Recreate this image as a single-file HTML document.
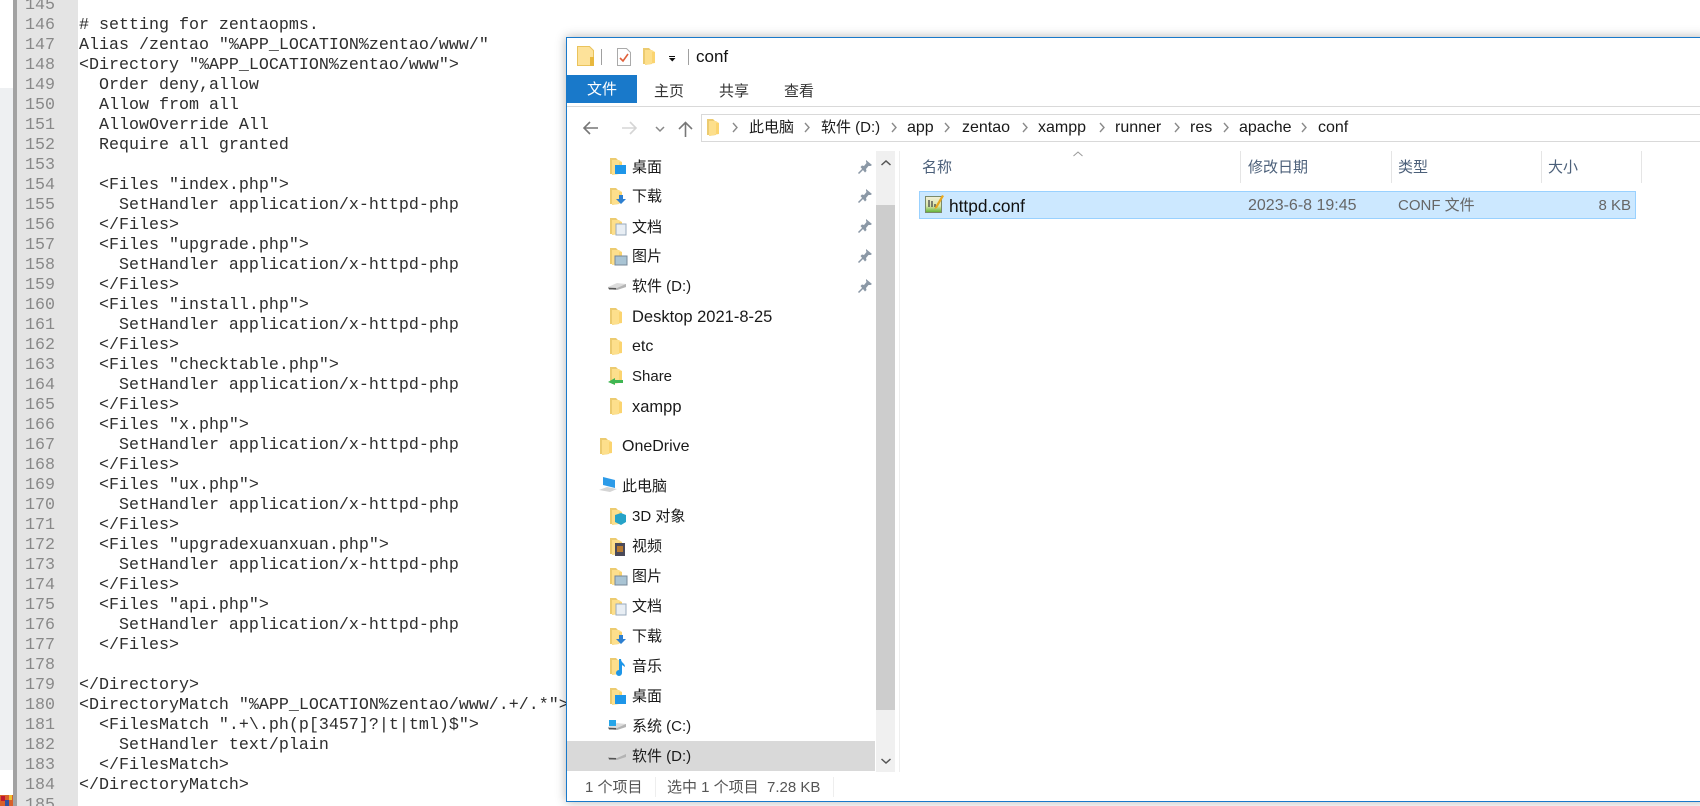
<!DOCTYPE html>
<html><head><meta charset="utf-8"><style>
html,body{margin:0;padding:0;width:1700px;height:806px;overflow:hidden;background:#fff}
#r{position:relative;width:1700px;height:806px;overflow:hidden;font-family:"Liberation Sans","Noto Sans CJK SC",sans-serif}
.a{position:absolute}
.t{position:absolute;white-space:pre;font-size:15px;line-height:20px;color:#1a1a1a}
.m{font-size:16px}
pre{position:absolute;margin:0;font:16.67px/20px "Liberation Mono",monospace}
.n{color:#555}.h{color:#4c607a}.g{color:#666}
svg{position:absolute;overflow:visible}
</style></head><body><div id="r">
<div class="a" style="left:0;top:88px;width:13px;height:682px;background:#eef0f2"></div>
<div class="a" style="left:13px;top:0;width:4px;height:806px;background:#a2a2a2"></div>
<div class="a" style="left:17px;top:0;width:61px;height:806px;background:#e4e4e4"></div>
<svg style="left:0;top:795px" width="13" height="11"><rect width="13" height="11" fill="#d8602a"/><rect x="1" y="1" width="4" height="5" fill="#c01830"/><rect x="5" y="5" width="4" height="6" fill="#3050a0"/><rect x="9" y="0" width="3" height="5" fill="#f0c030"/></svg>
<pre style="left:25px;top:-4px;color:#888">
145
146
147
148
149
150
151
152
153
154
155
156
157
158
159
160
161
162
163
164
165
166
167
168
169
170
171
172
173
174
175
176
177
178
179
180
181
182
183
184
185</pre>
<pre style="left:79px;top:-4px;color:#2e2e2e">

# setting for zentaopms.
Alias /zentao "%APP_LOCATION%zentao/www/"
&lt;Directory "%APP_LOCATION%zentao/www"&gt;
  Order deny,allow
  Allow from all
  AllowOverride All
  Require all granted

  &lt;Files "index.php"&gt;
    SetHandler application/x-httpd-php
  &lt;/Files&gt;
  &lt;Files "upgrade.php"&gt;
    SetHandler application/x-httpd-php
  &lt;/Files&gt;
  &lt;Files "install.php"&gt;
    SetHandler application/x-httpd-php
  &lt;/Files&gt;
  &lt;Files "checktable.php"&gt;
    SetHandler application/x-httpd-php
  &lt;/Files&gt;
  &lt;Files "x.php"&gt;
    SetHandler application/x-httpd-php
  &lt;/Files&gt;
  &lt;Files "ux.php"&gt;
    SetHandler application/x-httpd-php
  &lt;/Files&gt;
  &lt;Files "upgradexuanxuan.php"&gt;
    SetHandler application/x-httpd-php
  &lt;/Files&gt;
  &lt;Files "api.php"&gt;
    SetHandler application/x-httpd-php
  &lt;/Files&gt;

&lt;/Directory&gt;
&lt;DirectoryMatch "%APP_LOCATION%zentao/www/.+/.*"&gt;
  &lt;FilesMatch ".+\.ph(p[3457]?|t|tml)$"&gt;
    SetHandler text/plain
  &lt;/FilesMatch&gt;
&lt;/DirectoryMatch&gt;
</pre>

<div class="a" style="left:566px;top:37px;width:1140px;height:763px;background:#fff;border:1px solid #1979ca;border-width:1px 0 1px 1px;box-shadow:0 0 10px rgba(0,0,0,.3)"></div>

<svg width="0" height="0" style="left:0;top:0"><defs>
<g id="f"><path d="M0 0h6l3 3v13l-7 1v-1H0z" fill="#eccb70"/><path d="M2 2h7l3 2v11l-10 2z" fill="#fddf8c"/><path d="M9 4h3v11H9z" fill="#fbd470"/></g>
<g id="p"><path d="M8 0l6 5-1.500 1-2 0-2.500 3 .5 2-1.500 1.500L2.500 7 4 5.500l2 .5 2.500-3-.5-1.500z" fill="#8b98a6"/><path d="M5 9L.5 13.500" stroke="#8b98a6" stroke-width="1.500"/></g>
<path id="c" d="M0 0l4 4.500-4 4.500" fill="none" stroke="#8a8a8a" stroke-width="1.400"/>
<g id="d"><path d="M0 7l9-4 9 1v3l-9 3-9-1z" fill="#dcdcdc"/><path d="M0 7l9 1 9-4v3l-9 3-9-1z" fill="#b4b4b4"/><rect x="1" y="8" width="7" height="1.500" fill="#555"/></g>
</defs></svg>

<!-- title bar -->
<svg style="left:577px;top:46px" width="18" height="21"><path d="M.5.500h12l4 4v15H.5z" fill="#fde29a" stroke="#eac35c"/><rect x="13" y="11" width="4" height="9" fill="#e8b83e"/></svg>
<div class="a" style="left:601px;top:49px;width:1px;height:16px;background:#a0a0a0"></div>
<svg style="left:617px;top:48px" width="14" height="18"><path d="M.5.500h9l4 4v13H.5z" fill="#fff" stroke="#aaa"/><path d="M3 10l3 3 5-7" fill="none" stroke="#e0603a" stroke-width="1.600"/></svg>
<svg style="left:643px;top:48px" width="14" height="19"><use href="#f"/></svg>
<div class="a" style="left:669px;top:56px;width:6px;height:1px;background:#111"></div>
<svg style="left:669px;top:58px" width="7" height="4"><path d="M0 0h6.500l-3.200 3.500z" fill="#111"/></svg>
<div class="a" style="left:688px;top:49px;width:1px;height:16px;background:#a0a0a0"></div>
<div class="t" style="left:696px;top:46px;font-size:17px;line-height:22px;color:#111">conf</div>

<!-- tabs -->
<div class="a" style="left:567px;top:75px;width:70px;height:28px;background:#1979ca"></div>
<div class="t" style="left:587px;top:80px;color:#fff">文件</div>
<div class="t" style="left:654px;top:82px;color:#333">主页</div>
<div class="t" style="left:719px;top:82px;color:#333">共享</div>
<div class="t" style="left:784px;top:82px;color:#333">查看</div>
<div class="a" style="left:567px;top:106px;width:1133px;height:1px;background:#d9d9d9"></div>

<!-- nav buttons -->
<svg style="left:583px;top:121px" width="16" height="14"><path d="M15 7H1M7 1L1 7l6 6" fill="none" stroke="#777" stroke-width="1.600"/></svg>
<svg style="left:622px;top:121px" width="16" height="14"><path d="M0 7h14M8 1l6 6-6 6" fill="none" stroke="#d5d5d5" stroke-width="1.600"/></svg>
<svg style="left:655px;top:126px" width="10" height="6"><path d="M1 1l4 4 4-4" fill="none" stroke="#888" stroke-width="1.500"/></svg>
<svg style="left:678px;top:121px" width="15" height="16"><path d="M7.500 16V1.500M1 8l6.500-6.500L14 8" fill="none" stroke="#777" stroke-width="1.600"/></svg>

<!-- address -->
<div class="a" style="left:701px;top:114px;width:1000px;height:26px;border:1px solid #d9d9d9"></div>
<svg style="left:707px;top:119px" width="14" height="19"><use href="#f"/></svg>
<svg style="left:733px;top:123px"><use href="#c"/></svg>
<svg style="left:805px;top:123px"><use href="#c"/></svg>
<svg style="left:892px;top:123px"><use href="#c"/></svg>
<svg style="left:945px;top:123px"><use href="#c"/></svg>
<svg style="left:1023px;top:123px"><use href="#c"/></svg>
<svg style="left:1100px;top:123px"><use href="#c"/></svg>
<svg style="left:1175px;top:123px"><use href="#c"/></svg>
<svg style="left:1224px;top:123px"><use href="#c"/></svg>
<svg style="left:1302px;top:123px"><use href="#c"/></svg>
<div class="t" style="left:749px;top:118px">此电脑</div>
<div class="t" style="left:821px;top:118px">软件 (D:)</div>
<div class="t m" style="left:907px;top:118px">app</div>
<div class="t m" style="left:962px;top:118px">zentao</div>
<div class="t m" style="left:1038px;top:118px">xampp</div>
<div class="t m" style="left:1115px;top:118px">runner</div>
<div class="t m" style="left:1190px;top:118px">res</div>
<div class="t m" style="left:1239px;top:118px">apache</div>
<div class="t m" style="left:1318px;top:118px">conf</div>

<!-- nav pane selection -->
<div class="a" style="left:567px;top:741px;width:308px;height:30px;background:#d9d9d9"></div>

<!-- nav icons -->
<svg style="left:610px;top:158px" width="20" height="19"><use href="#f"/><rect x="5" y="7" width="11" height="9" fill="#1e96e8"/></svg>
<svg style="left:610px;top:188px" width="20" height="19"><use href="#f"/><path d="M9 7h4v4h3l-5 5-5-5h3z" fill="#2d7fd0"/></svg>
<svg style="left:610px;top:218px" width="20" height="19"><use href="#f"/><rect x="6" y="6" width="10" height="11" fill="#e8eef4" stroke="#9ab"/></svg>
<svg style="left:610px;top:248px" width="20" height="19"><use href="#f"/><rect x="5" y="8" width="12" height="9" fill="#a9c4d4" stroke="#789"/></svg>
<svg style="left:608px;top:280px" width="20" height="14"><use href="#d"/></svg>
<svg style="left:610px;top:308px" width="20" height="19"><use href="#f"/></svg>
<svg style="left:610px;top:338px" width="20" height="19"><use href="#f"/></svg>
<svg style="left:610px;top:367px" width="20" height="19"><use href="#f"/><path d="M-2 15l7-4v2h8v3H5v2z" fill="#3fb552"/></svg>
<svg style="left:610px;top:398px" width="20" height="19"><use href="#f"/></svg>
<svg style="left:600px;top:438px" width="20" height="19"><use href="#f"/></svg>
<svg style="left:597px;top:476px" width="23" height="20"><path d="M2 14l11 2 7-3-10-2z" fill="#d5d5d5"/><path d="M6 1l12 3v8L6 9z" fill="#2d9be8"/></svg>
<svg style="left:610px;top:508px" width="20" height="19"><use href="#f"/><path d="M5 7l6-2 5 2v7l-5 3-6-3z" fill="#26a3c8"/></svg>
<svg style="left:610px;top:538px" width="20" height="19"><use href="#f"/><rect x="5" y="5" width="10" height="13" fill="#4a4a5a"/><rect x="7" y="8" width="6" height="6" fill="#b87a30"/></svg>
<svg style="left:610px;top:568px" width="20" height="19"><use href="#f"/><rect x="5" y="8" width="12" height="9" fill="#a9c4d4" stroke="#789"/></svg>
<svg style="left:610px;top:598px" width="20" height="19"><use href="#f"/><rect x="6" y="6" width="10" height="11" fill="#e8eef4" stroke="#9ab"/></svg>
<svg style="left:610px;top:628px" width="20" height="19"><use href="#f"/><path d="M9 7h4v4h3l-5 5-5-5h3z" fill="#2d7fd0"/></svg>
<svg style="left:610px;top:658px" width="20" height="19"><use href="#f"/><path d="M9 1h2c0 4 4 4 4 8l-3-2v8a3 3 0 1 1-3-3z" fill="#1e96e8"/></svg>
<svg style="left:610px;top:688px" width="20" height="19"><use href="#f"/><rect x="5" y="7" width="11" height="9" fill="#1e96e8"/></svg>
<svg style="left:608px;top:720px" width="20" height="14"><use href="#d"/><rect x="1" y="0" width="7" height="6" fill="#27a5e8"/></svg>
<svg style="left:608px;top:750px" width="20" height="14"><use href="#d"/></svg>

<!-- nav text -->
<div class="t" style="left:632px;top:158px">桌面</div>
<div class="t" style="left:632px;top:187px">下载</div>
<div class="t" style="left:632px;top:218px">文档</div>
<div class="t" style="left:632px;top:247px">图片</div>
<div class="t" style="left:632px;top:277px">软件 (D:)</div>
<div class="t" style="left:632px;top:307px;font-size:16.500px">Desktop 2021-8-25</div>
<div class="t m" style="left:632px;top:337px">etc</div>
<div class="t" style="left:632px;top:367px">Share</div>
<div class="t" style="left:632px;top:397px;font-size:16.500px">xampp</div>
<div class="t" style="left:622px;top:437px;font-size:16px">OneDrive</div>
<div class="t" style="left:622px;top:477px">此电脑</div>
<div class="t" style="left:632px;top:507px">3D 对象</div>
<div class="t" style="left:632px;top:537px">视频</div>
<div class="t" style="left:632px;top:567px">图片</div>
<div class="t" style="left:632px;top:597px">文档</div>
<div class="t" style="left:632px;top:627px">下载</div>
<div class="t" style="left:632px;top:657px">音乐</div>
<div class="t" style="left:632px;top:687px">桌面</div>
<div class="t" style="left:632px;top:717px">系统 (C:)</div>
<div class="t" style="left:632px;top:747px">软件 (D:)</div>

<!-- pins -->
<svg style="left:858px;top:160px" width="14" height="14"><use href="#p"/></svg>
<svg style="left:858px;top:189px" width="14" height="14"><use href="#p"/></svg>
<svg style="left:858px;top:219px" width="14" height="14"><use href="#p"/></svg>
<svg style="left:858px;top:249px" width="14" height="14"><use href="#p"/></svg>
<svg style="left:858px;top:279px" width="14" height="14"><use href="#p"/></svg>

<!-- scrollbar -->
<div class="a" style="left:876px;top:151px;width:19px;height:621px;background:#f0f0f0"></div>
<div class="a" style="left:876px;top:205px;width:19px;height:505px;background:#cdcdcd"></div>
<svg style="left:881px;top:160px" width="10" height="6"><path d="M.5 5L5 1l4.500 4" fill="none" stroke="#555" stroke-width="1.500"/></svg>
<svg style="left:881px;top:758px" width="10" height="6"><path d="M.5 1L5 5l4.500-4" fill="none" stroke="#555" stroke-width="1.500"/></svg>
<div class="a" style="left:899px;top:151px;width:1px;height:621px;background:#eee"></div>

<!-- headers -->
<div class="t h" style="left:922px;top:158px">名称</div>
<svg style="left:1073px;top:151px" width="10" height="6"><path d="M.5 5L5 1l4.500 4" fill="none" stroke="#999"/></svg>
<div class="a" style="left:1240px;top:151px;width:1px;height:32px;background:#e5e5e5"></div>
<div class="a" style="left:1391px;top:151px;width:1px;height:32px;background:#e5e5e5"></div>
<div class="a" style="left:1541px;top:151px;width:1px;height:32px;background:#e5e5e5"></div>
<div class="a" style="left:1641px;top:151px;width:1px;height:32px;background:#e5e5e5"></div>
<div class="t h" style="left:1248px;top:158px">修改日期</div>
<div class="t h" style="left:1398px;top:158px">类型</div>
<div class="t h" style="left:1548px;top:158px">大小</div>

<!-- row -->
<div class="a" style="left:919px;top:191px;width:715px;height:26px;background:#cce8ff;border:1px solid #99d1ff"></div>
<svg style="left:925px;top:194px" width="20" height="20"><defs><linearGradient id="pg" x1="0" y1="0" x2="0" y2="1"><stop offset="0" stop-color="#f2efd8"/><stop offset=".6" stop-color="#d8e6a8"/><stop offset="1" stop-color="#5cb030"/></linearGradient></defs><rect x=".5" y="2.500" width="16" height="16" fill="url(#pg)" stroke="#7a8a6a"/><path d="M4 13V6M7 13V7M10 13v-3" stroke="#444" stroke-width="1.300"/><path d="M10 13l7-12 2 1-7 12-2.500 1z" fill="#e8a820"/></svg>
<div class="t" style="left:949px;top:196px;font-size:17.300px;color:#111">httpd.conf</div>
<div class="t g" style="left:1248px;top:196px;font-size:16px">2023-6-8 19:45</div>
<div class="t g" style="left:1398px;top:196px">CONF 文件</div>
<div class="t g" style="left:1580px;top:196px;width:51px;text-align:right">8 KB</div>

<!-- status -->
<div class="t n" style="left:585px;top:778px">1 个项目</div>
<div class="a" style="left:655px;top:777px;width:1px;height:20px;background:#eee"></div>
<div class="t n" style="left:667px;top:778px">选中 1 个项目</div>
<div class="t n" style="left:767px;top:778px">7.28 KB</div>
<div class="a" style="left:833px;top:777px;width:1px;height:20px;background:#eee"></div>
</div></body></html>
